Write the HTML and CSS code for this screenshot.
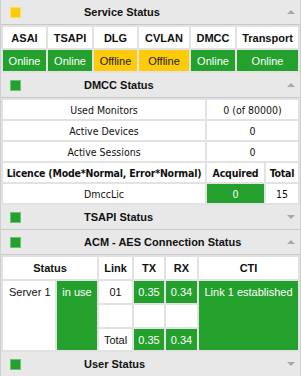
FILE: index.html
```html
<!DOCTYPE html>
<html lang="en">
<head>
    <meta charset="UTF-8">
    <meta name="viewport" content="width=device-width, initial-scale=1.0">
    <title>AE Services Status</title>
    <link rel="stylesheet" href="styles.css">
</head>
<body>
    <div class="status-page">

        <!-- Service Status -->
        <section class="panel">
            <div class="panel-head">
                <span class="led warn"></span>
                <h2>Service Status</h2>
                <span class="caret up"></span>
            </div>
            <table class="grid services">
                <colgroup>
                    <col class="c-asai">
                    <col class="c-tsapi">
                    <col class="c-dlg">
                    <col class="c-cvlan">
                    <col class="c-dmcc">
                    <col class="c-transport">
                </colgroup>
                <tr class="head-row">
                    <th>ASAI</th>
                    <th>TSAPI</th>
                    <th>DLG</th>
                    <th>CVLAN</th>
                    <th>DMCC</th>
                    <th>Transport</th>
                </tr>
                <tr>
                    <td class="ok">Online</td>
                    <td class="ok">Online</td>
                    <td class="off">Offline</td>
                    <td class="off">Offline</td>
                    <td class="ok">Online</td>
                    <td class="ok">Online</td>
                </tr>
            </table>
        </section>

        <!-- DMCC Status -->
        <section class="panel">
            <div class="panel-head">
                <span class="led good"></span>
                <h2>DMCC Status</h2>
                <span class="caret up"></span>
            </div>
            <table class="grid dmcc">
                <colgroup>
                    <col class="c-label">
                    <col class="c-acquired">
                    <col class="c-total">
                </colgroup>
                <tr>
                    <td>Used Monitors</td>
                    <td colspan="2">0 (of 80000)</td>
                </tr>
                <tr>
                    <td>Active Devices</td>
                    <td colspan="2">0</td>
                </tr>
                <tr>
                    <td>Active Sessions</td>
                    <td colspan="2">0</td>
                </tr>
                <tr>
                    <th>Licence (Mode*Normal, Error*Normal)</th>
                    <th>Acquired</th>
                    <th>Total</th>
                </tr>
                <tr>
                    <td>DmccLic</td>
                    <td class="ok">0</td>
                    <td>15</td>
                </tr>
            </table>
        </section>

        <!-- TSAPI Status -->
        <section class="panel">
            <div class="panel-head">
                <span class="led good"></span>
                <h2>TSAPI Status</h2>
                <span class="caret down"></span>
            </div>
        </section>

        <!-- ACM - AES Connection Status -->
        <section class="panel">
            <div class="panel-head">
                <span class="led good"></span>
                <h2>ACM - AES Connection Status</h2>
                <span class="caret up"></span>
            </div>
            <table class="grid acm">
                <colgroup>
                    <col class="c-server">
                    <col class="c-state">
                    <col class="c-link">
                    <col class="c-tx">
                    <col class="c-rx">
                    <col class="c-cti">
                </colgroup>
                <tr class="head-row">
                    <th colspan="2">Status</th>
                    <th>Link</th>
                    <th>TX</th>
                    <th>RX</th>
                    <th>CTI</th>
                </tr>
                <tr class="row-a">
                    <td rowspan="3" class="top server">Server 1</td>
                    <td rowspan="3" class="top ok">in use</td>
                    <td>01</td>
                    <td class="ok">0.35</td>
                    <td class="ok">0.34</td>
                    <td rowspan="3" class="top ok">Link 1 established</td>
                </tr>
                <tr class="row-b">
                    <td></td>
                    <td></td>
                    <td></td>
                </tr>
                <tr class="row-c">
                    <td>Total</td>
                    <td class="ok">0.35</td>
                    <td class="ok">0.34</td>
                </tr>
            </table>
        </section>

        <!-- User Status -->
        <section class="panel">
            <div class="panel-head">
                <span class="led good"></span>
                <h2>User Status</h2>
                <span class="caret down"></span>
            </div>
        </section>

    </div>
</body>
</html>
```

FILE: styles.css
```css
/* Base */
* {
    box-sizing: border-box;
    margin: 0;
    padding: 0;
}

body {
    font-family: 'Liberation Sans', Arial, sans-serif;
    font-size: 11px;
    color: #111;
    background: #e6e6e6;
}

.status-page {
    width: 301px;
    border-left: 1px solid #cfcfcf;
    border-right: 1px solid #cfcfcf;
    background: #e6e6e6;
}

/* Panel headers */
.panel-head {
    display: grid;
    grid-template-columns: 74px 1fr auto;
    align-items: center;
    height: 25px;
    padding: 0 4px 0 9px;
    background: #e8e8e8;
    border-bottom: 1px solid #c9c9c9;
}

.panel-head h2 {
    font-size: 11px;
    font-weight: bold;
    color: #111;
}

.led {
    width: 11px;
    height: 11px;
    border: 1px solid rgba(255, 255, 255, 0.35);
}

.led.good {
    background: #23a12c;
}

.led.warn {
    background: #fecb0b;
}

.caret {
    width: 0;
    height: 0;
    border-left: 4px solid transparent;
    border-right: 4px solid transparent;
    margin-right: 1px;
}

.caret.up {
    border-bottom: 4px solid #a8a8a8;
}

.caret.down {
    border-top: 4px solid #a8a8a8;
}

/* Tables */
.grid {
    width: 100%;
    table-layout: fixed;
    border-collapse: separate;
    border-spacing: 2px;
    background: #e2e2e2;
}

.grid td, .grid th {
    padding: 0;
    background: #fff;
    text-align: center;
    vertical-align: middle;
    white-space: nowrap;
    overflow: hidden;
}

.grid th {
    font-weight: bold;
    color: #111;
}

.grid .ok {
    background: #23a12c;
    color: #fff;
}

.grid .off {
    background: #fecb0b;
    color: #222;
}

/* Service Status */
.c-asai { width: 43px; }
.c-tsapi { width: 44px; }
.c-dlg { width: 43px; }
.c-cvlan { width: 50px; }
.c-dmcc { width: 44px; }
.c-transport { width: 61px; }

.services td, .services th {
    height: 21px;
}

/* DMCC Status - uses the narrower UI face */
.c-label { width: 202px; }
.c-acquired { width: 57px; }
.c-total { width: 32px; }

.dmcc td, .dmcc th {
    height: 19px;
    font-family: 'DejaVu Sans Condensed', 'DejaVu Sans', sans-serif;
    font-size: 10.5px;
}

.dmcc th {
    letter-spacing: -0.2px;
}

/* ACM - AES Connection Status */
.c-server { width: 52px; }
.c-state { width: 40px; }
.c-link { width: 33px; }
.c-tx { width: 30px; }
.c-rx { width: 31px; }
.c-cti { width: 99px; }

.acm td, .acm th {
    height: 22px;
}

.acm .row-c td {
    height: 21px;
}

.acm td.top {
    vertical-align: top;
    padding-top: 5px;
}

.acm td.server {
    text-align: left;
    padding-left: 6px;
}
```
